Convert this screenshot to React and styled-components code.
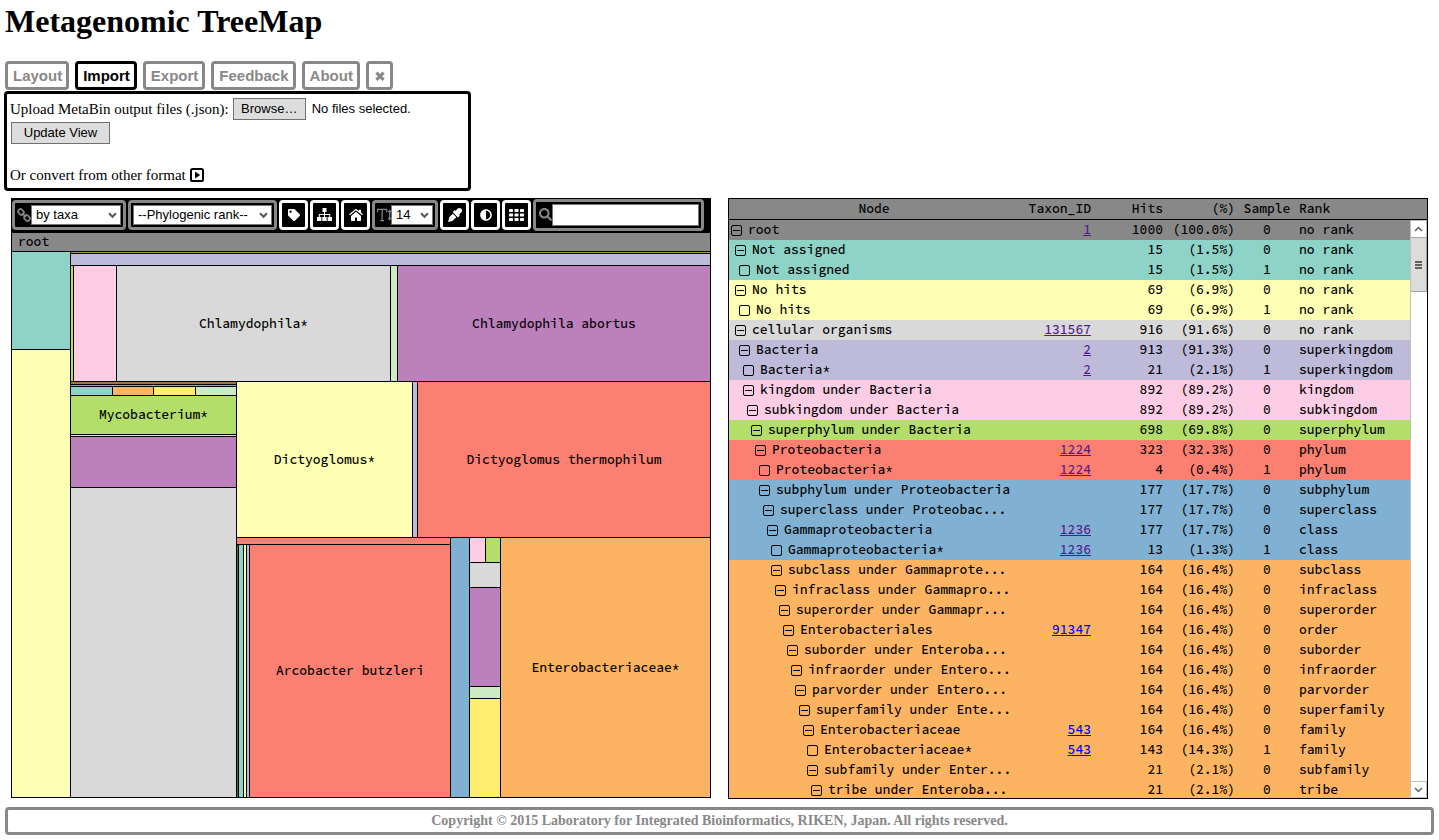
import React, { useRef } from 'react';
import styled, { createGlobalStyle } from 'styled-components';
import { FaTag, FaEyeDropper, FaAdjust, FaSearch } from 'react-icons/fa';

const MONO = '"Source Code Pro", "DejaVu Sans Mono", monospace';
const SANS = '"Liberation Sans", Arial, sans-serif';
const SERIF = '"Liberation Serif", "Times New Roman", serif';

const C = {
  gray: '#888888',
  teal: '#8dd3c7',
  cream: '#ffffb3',
  lavender: '#bebada',
  red: '#fb8072',
  blue: '#80b1d3',
  orange: '#fdb462',
  green: '#b3de69',
  pink: '#fccde5',
  silver: '#d9d9d9',
  purple: '#bc80bd',
  mint: '#ccebc5',
  yellow: '#ffed6f',
  gold: '#b0973e',
  brown: '#a8743c',
  slate: '#3f6a66',
};

const GlobalStyle = createGlobalStyle`
  * { box-sizing: border-box; }
  body {
    margin: 0;
    background: #fff;
    color: #000;
    font: 15px/20px ${SERIF};
  }
`;

const Page = styled.div`
  display: flex;
  flex-direction: column;
  padding: 2px 5px 5px 4px;
`;

const Title = styled.h1`
  margin: 0 0 21px 1px;
  font-size: 32px;
  line-height: 38px;
`;

const Tabs = styled.nav`
  display: flex;
  flex-wrap: wrap;
  gap: 6px;
  margin: 0 0 1px 1px;
`;

const Tab = styled.button`
  display: flex;
  align-items: center;
  height: 29px;
  padding: 0 4px 0 5px;
  border: 3px solid ${(p) => (p.$active ? '#000' : C.gray)};
  border-radius: 4px;
  background: #fff;
  color: ${(p) => (p.$active ? '#000' : C.gray)};
  font: bold 15px/18px ${SANS};
`;

const ImportPanel = styled.section`
  display: flex;
  flex-direction: column;
  align-items: flex-start;
  gap: 2px;
  width: 100%;
  max-width: 467px;
  padding: 4px 3px 1px;
  border: 3px solid #000;
  border-radius: 4px;
`;

const Line = styled.div`
  display: flex;
  flex-wrap: wrap;
  align-items: center;
  gap: 4px;
`;

const ConvertLine = styled(Line)`
  margin-top: 17px;
  line-height: 24px;
`;

const PlainButton = styled.button`
  min-width: ${(p) => p.$width}px;
  height: 22px;
  padding: 0 6px;
  border: 1px solid #707070;
  background: #dddddd;
  font: 13px/18px ${SANS};
`;

const UpdateButton = styled(PlainButton)`
  margin-left: 1px;
`;

const FileStatus = styled.span`
  margin-left: 2px;
  font: 13px/20px ${SANS};
`;

const IconButton = styled.button`
  display: flex;
  padding: 0;
  border: 0;
  background: none;
`;

const Panels = styled.main`
  display: grid;
  grid-template-columns: minmax(0, 1fr) minmax(0, 1fr);
  align-items: start;
  gap: 17px;
  margin: 7px 6px 8px 7px;
`;

const MapPanel = styled.section`
  display: flex;
  flex-direction: column;
  height: 600px;
  padding: 0 1px 1px;
  background: #000;
`;

const Toolbar = styled.div`
  display: flex;
  align-items: center;
  gap: 2px;
  height: 35px;
  padding: 0 6px 2px 0;
`;

const Group = styled.label`
  display: flex;
  align-items: center;
  flex: ${(p) => (p.$grow ? '1 1 0' : 'none')};
  min-width: 0;
  height: ${(p) => (p.$grow ? 32 : 30)}px;
  padding: 2px;
  border: 3px solid ${C.gray};
  border-radius: 4px;
  color: ${C.gray};
`;

const GroupIcon = styled.span`
  display: flex;
  flex: none;
  justify-content: center;
  width: 14px;
`;

const SelectWrap = styled.span`
  display: flex;
  position: relative;
  width: ${(p) => p.$width}px;
`;

const Select = styled.select`
  appearance: none;
  width: 100%;
  height: 20px;
  padding: 0 0 0 4px;
  border: 1px solid #777;
  border-radius: 0;
  background: #fff;
  color: #000;
  font: 13px/18px ${SANS};
`;

const Chevron = styled.svg`
  position: absolute;
  right: 4px;
  top: 7px;
  pointer-events: none;
`;

const SearchInput = styled.input`
  flex: 1 1 0;
  width: 0;
  min-width: 0;
  height: 22px;
  padding: 0 4px;
  border: 1px solid #777;
  background: #fff;
  font: 13px/18px ${SANS};
`;

const ToolButton = styled.button`
  display: flex;
  flex: none;
  align-items: center;
  justify-content: center;
  width: 29px;
  height: 30px;
  padding: 0;
  border: 3px solid #fff;
  border-radius: 4px;
  background: #000;
  color: #fff;
`;

const RootBar = styled.div`
  height: 18px;
  margin-bottom: 1px;
  padding-left: 6px;
  background: ${C.gray};
  font: 500 13px/18px ${MONO};
`;

const Split = styled.div`
  display: grid;
  flex: 1;
  gap: 1px;
  min-width: 0;
  min-height: 0;
  ${(p) => (p.$dir === 'row' ? 'grid-template-columns' : 'grid-template-rows')}:
    ${(p) => p.$sizes.map((s) => `minmax(0, ${s}fr)`).join(' ')};
`;

const Tile = styled.div`
  display: flex;
  align-items: center;
  justify-content: center;
  min-width: 0;
  min-height: 0;
  overflow: hidden;
  background: ${(p) => p.$color};
  font: 500 13px/18px ${MONO};
  white-space: nowrap;
`;

const TablePanel = styled.section`
  position: relative;
  height: 601px;
  overflow: hidden;
  border: 1px solid #000;
`;

const Table = styled.table`
  width: 100%;
  table-layout: fixed;
  border-spacing: 0;
  font: 500 13px/20px ${MONO};
`;

const Th = styled.th`
  height: 21px;
  padding: 0 4px;
  border-bottom: 1px solid #000;
  background: ${C.gray};
  font-weight: 500;
  text-align: ${(p) => p.$align};
  white-space: nowrap;

  &:nth-child(5) { padding: 0; }
`;

const Tr = styled.tr`
  background: ${(p) => p.$color};
`;

const Td = styled.td`
  height: 20px;
  padding: 0 4px;
  text-align: ${(p) => p.$align};
  white-space: nowrap;
`;

const NodeTd = styled.td`
  height: 20px;
  padding: 0 0 0 ${(p) => 2 + p.$level * 4}px;
`;

const NodeCell = styled.div`
  display: flex;
  align-items: center;
  gap: 6px;
  white-space: nowrap;
`;

const Toggle = styled.button`
  display: flex;
  align-items: center;
  justify-content: center;
  flex: none;
  width: 11px;
  height: 11px;
  padding: 0;
  border: 1px solid #000;
  border-radius: 2px;
  background: none;

  &::before {
    content: '';
    width: ${(p) => (p.$leaf ? 0 : 7)}px;
    height: 1px;
    background: #000;
  }
`;

const TaxonLink = styled.a`
  color: ${(p) => (p.$visited ? '#551a8b' : '#0000ee')};
`;

const ScrollBar = styled.div`
  position: absolute;
  top: 21px;
  right: 0;
  bottom: 0;
  display: flex;
  flex-direction: column;
  width: 17px;
  border-left: 1px solid #c0c0c0;
  background: #fff;
`;

const ScrollArrow = styled.button`
  display: flex;
  align-items: center;
  justify-content: center;
  height: 17px;
  padding: 0;
  border: solid #c0c0c0;
  border-width: ${(p) => (p.$down ? '1px 1px 1px 0' : '1px 1px 0 0')};
  background: #fff;
`;

const Thumb = styled.div`
  display: flex;
  flex-direction: column;
  align-items: center;
  justify-content: center;
  gap: 1px;
  height: 55px;
  margin-bottom: auto;
  border: 1px solid #a6a6a6;
  border-left: 0;
  background: #dcdcdc;
`;

const Grip = styled.span`
  width: 7px;
  height: 2px;
  background: #606060;
`;

const Footer = styled.footer`
  margin-left: 1px;
  padding: 2px;
  border: 3px solid ${C.gray};
  border-radius: 4px;
  color: ${C.gray};
  font-size: 14px;
  line-height: 18px;
  font-weight: bold;
  text-align: center;
`;

const tile = (size, color, label) => ({ size, color, label });
const split = (size, dir, items) => ({ size, dir, items });

const treemap = split(1, 'row', [
  split(58, 'column', [tile(97, C.teal), tile(447, C.cream)]),
  split(639, 'column', [
    tile(1, C.gold),
    tile(11, C.lavender),
    split(115, 'row', [
      tile(2, C.green),
      tile(42, C.pink),
      tile(273, C.silver, 'Chlamydophila*'),
      tile(6, C.mint),
      tile(312, C.purple, 'Chlamydophila abortus'),
    ]),
    split(415, 'row', [
      split(165, 'column', [
        tile(2, C.brown),
        tile(1, C.blue),
        split(8, 'row', [tile(1, C.teal), tile(1, C.orange), tile(1, C.yellow), tile(1, C.mint)]),
        tile(38, C.green, 'Mycobacterium*'),
        tile(1, C.pink),
        tile(50, C.purple),
        tile(309, C.silver),
      ]),
      split(473, 'column', [
        split(155, 'row', [
          tile(175, C.cream, 'Dictyoglomus*'),
          tile(4, C.lavender),
          tile(292, C.red, 'Dictyoglomus thermophilum'),
        ]),
        split(259, 'row', [
          split(213, 'column', [
            tile(6, C.red),
            split(252, 'row', [
              tile(1, C.slate),
              tile(4, C.teal),
              tile(2, C.cream),
              tile(2, C.lavender),
              tile(200, C.red, 'Arcobacter butzleri'),
            ]),
          ]),
          tile(18, C.blue),
          split(30, 'column', [
            split(24, 'row', [tile(15, C.pink), tile(14, C.green)]),
            tile(24, C.silver),
            tile(98, C.purple),
            tile(11, C.mint),
            tile(98, C.yellow),
          ]),
          tile(209, C.orange, 'Enterobacteriaceae*'),
        ]),
      ]),
    ]),
  ]),
]);

function TreeMap({ node }) {
  if (!node.items) return <Tile $color={node.color}>{node.label}</Tile>;
  return (
    <Split $dir={node.dir} $sizes={node.items.map((n) => n.size)}>
      {node.items.map((n, i) => (
        <TreeMap key={i} node={n} />
      ))}
    </Split>
  );
}

// level, name, taxon id, hits, percent, sample, rank, colour
const rows = [
  [0, 'root', '1', 1000, '100.0', 0, 'no rank', C.gray],
  [1, 'Not assigned', '', 15, '1.5', 0, 'no rank', C.teal],
  [2, 'Not assigned', '', 15, '1.5', 1, 'no rank', C.teal],
  [1, 'No hits', '', 69, '6.9', 0, 'no rank', C.cream],
  [2, 'No hits', '', 69, '6.9', 1, 'no rank', C.cream],
  [1, 'cellular organisms', '131567', 916, '91.6', 0, 'no rank', C.silver],
  [2, 'Bacteria', '2', 913, '91.3', 0, 'superkingdom', C.lavender],
  [3, 'Bacteria*', '2', 21, '2.1', 1, 'superkingdom', C.lavender],
  [3, 'kingdom under Bacteria', '', 892, '89.2', 0, 'kingdom', C.pink],
  [4, 'subkingdom under Bacteria', '', 892, '89.2', 0, 'subkingdom', C.pink],
  [5, 'superphylum under Bacteria', '', 698, '69.8', 0, 'superphylum', C.green],
  [6, 'Proteobacteria', '1224', 323, '32.3', 0, 'phylum', C.red],
  [7, 'Proteobacteria*', '1224', 4, '0.4', 1, 'phylum', C.red],
  [7, 'subphylum under Proteobacteria', '', 177, '17.7', 0, 'subphylum', C.blue],
  [8, 'superclass under Proteobac...', '', 177, '17.7', 0, 'superclass', C.blue],
  [9, 'Gammaproteobacteria', '1236', 177, '17.7', 0, 'class', C.blue],
  [10, 'Gammaproteobacteria*', '1236', 13, '1.3', 1, 'class', C.blue],
  [10, 'subclass under Gammaprote...', '', 164, '16.4', 0, 'subclass', C.orange],
  [11, 'infraclass under Gammapro...', '', 164, '16.4', 0, 'infraclass', C.orange],
  [12, 'superorder under Gammapr...', '', 164, '16.4', 0, 'superorder', C.orange],
  [13, 'Enterobacteriales', '91347', 164, '16.4', 0, 'order', C.orange],
  [14, 'suborder under Enteroba...', '', 164, '16.4', 0, 'suborder', C.orange],
  [15, 'infraorder under Entero...', '', 164, '16.4', 0, 'infraorder', C.orange],
  [16, 'parvorder under Entero...', '', 164, '16.4', 0, 'parvorder', C.orange],
  [17, 'superfamily under Ente...', '', 164, '16.4', 0, 'superfamily', C.orange],
  [18, 'Enterobacteriaceae', '543', 164, '16.4', 0, 'family', C.orange],
  [19, 'Enterobacteriaceae*', '543', 143, '14.3', 1, 'family', C.orange],
  [19, 'subfamily under Enter...', '', 21, '2.1', 0, 'subfamily', C.orange],
  [20, 'tribe under Enteroba...', '', 21, '2.1', 0, 'tribe', C.orange],
];

const unvisited = ['91347', '543'];

const CloseIcon = () => (
  <svg width="12" height="12" viewBox="0 0 12 12" aria-hidden="true">
    <path d="M2.4 2.6l7.2 7.2M9.6 2.6L2.4 9.8" stroke="currentColor" strokeWidth="3.2" />
  </svg>
);

const CaretSquare = () => (
  <svg width="14" height="14" viewBox="0 0 14 14" aria-hidden="true">
    <rect x="1" y="1" width="12" height="12" rx="1.6" fill="none" stroke="#000" strokeWidth="2" />
    <path d="M5 3.6v6.8L10.2 7z" />
  </svg>
);

const ChainIcon = () => (
  <svg width="14" height="14" viewBox="0 0 14 14" fill="none" stroke="currentColor" strokeWidth="1.6" aria-hidden="true">
    <rect x="-3" y="-2.3" width="6" height="4.6" rx="2" transform="translate(4 4) rotate(45)" />
    <rect x="-3" y="-2.3" width="6" height="4.6" rx="2" transform="translate(10 10) rotate(45)" />
    <path d="M5 5l4 4" />
  </svg>
);

const SitemapIcon = () => (
  <svg width="15" height="13" viewBox="0 0 15 13" fill="currentColor" aria-hidden="true">
    <path d="M5.5 0h4v4h-4zM0 9h4.4v4H0zM5.3 9h4.4v4H5.3zM10.6 9H15v4h-4.4zM7 4h1v5H7zM1.8 6h11.4v3h-1V7H2.8v2h-1z" />
  </svg>
);

const HomeIcon = () => (
  <svg width="14" height="12" viewBox="0 0 14 12" fill="currentColor" aria-hidden="true">
    <path d="M7 2.8L2 7v4.4c0 .3.3.6.6.6H6V8.5h2V12h3.4c.3 0 .6-.3.6-.6V7z" />
    <path d="M7 0c.4 0 .7.1 1 .4l2 1.700V.7h2v3l1.900 1.600-.8.900L7 1.200.9 6.200l-.8-.9L6 .4c.3-.3.600-.4 1-.4z" />
  </svg>
);

const GridIcon = () => (
  <svg width="15" height="12" viewBox="0 0 15 12" fill="currentColor" aria-hidden="true">
    {[0, 4.5, 9].map((y) => [0, 5.5, 11].map((x) => (
      <rect key={`${x}-${y}`} x={x} y={y} width="4" height="3" rx="0.4" />
    )))}
  </svg>
);

const TextHeightIcon = () => (
  <svg width="15" height="14" viewBox="0 0 15 14" aria-hidden="true">
    <path d="M.6 4V1h9.800v3M5.500 1v12M3.500 13h4M13.500 1.500v11" fill="none" stroke="currentColor" strokeWidth="1.300" />
    <path d="M11.300 4l2.200-3 1.500 2v1zM11.300 10l2.200 3 1.500-2v-1z" fill="currentColor" />
  </svg>
);

function SelectBox({ width, value }) {
  return (
    <SelectWrap $width={width}>
      <Select defaultValue={value}>
        <option>{value}</option>
      </Select>
      <Chevron width="9" height="7" viewBox="0 0 9 7" aria-hidden="true">
        <path d="M1 1.200l3.500 3.600L8 1.200" fill="none" stroke="#555" strokeWidth="2" />
      </Chevron>
    </SelectWrap>
  );
}

const ArrowIcon = ({ down }) => (
  <svg width="9" height="6" viewBox="0 0 9 6" aria-hidden="true">
    <path d={down ? 'M1 1l3.500 3.500L8 1' : 'M1 5l3.500-3.500L8 5'} fill="none" stroke="#606060" strokeWidth="1.500" />
  </svg>
);

export default function App() {
  const fileInput = useRef(null);
  return (
    <>
      <GlobalStyle />
      <Page>
        <Title>Metagenomic TreeMap</Title>
        <Tabs>
          <Tab>Layout</Tab>
          <Tab $active>Import</Tab>
          <Tab>Export</Tab>
          <Tab>Feedback</Tab>
          <Tab>About</Tab>
          <Tab aria-label="Close"><CloseIcon /></Tab>
        </Tabs>
        <ImportPanel>
          <Line>
            <label htmlFor="upload">Upload MetaBin output files (.json):</label>
            <input ref={fileInput} id="upload" type="file" accept=".json" multiple hidden />
            <PlainButton type="button" $width={73} onClick={() => fileInput.current.click()}>Browse…</PlainButton>
            <FileStatus>No files selected.</FileStatus>
          </Line>
          <UpdateButton type="button" $width={99}>Update View</UpdateButton>
          <ConvertLine>
            <span>Or convert from other format</span>
            <IconButton type="button" aria-label="Show converter"><CaretSquare /></IconButton>
          </ConvertLine>
        </ImportPanel>

        <Panels>
          <MapPanel>
            <Toolbar>
              <Group>
                <GroupIcon><ChainIcon /></GroupIcon>
                <SelectBox width={90} value="by taxa" />
              </Group>
              <Group>
                <SelectBox width={139} value="--Phylogenic rank--" />
              </Group>
              <ToolButton aria-label="Labels"><FaTag size={12} /></ToolButton>
              <ToolButton aria-label="Hierarchy"><SitemapIcon /></ToolButton>
              <ToolButton aria-label="Home"><HomeIcon /></ToolButton>
              <Group>
                <GroupIcon><TextHeightIcon /></GroupIcon>
                <SelectBox width={42} value="14" />
              </Group>
              <ToolButton aria-label="Pick colour"><FaEyeDropper size={14} /></ToolButton>
              <ToolButton aria-label="Contrast"><FaAdjust size={12} /></ToolButton>
              <ToolButton aria-label="Grid"><GridIcon /></ToolButton>
              <Group $grow>
                <GroupIcon><FaSearch size={13} /></GroupIcon>
                <SearchInput type="search" aria-label="Search" />
              </Group>
            </Toolbar>
            <RootBar>root</RootBar>
            <TreeMap node={treemap} />
          </MapPanel>

          <TablePanel>
            <Table>
              <colgroup>
                <col />
                <col width="76" />
                <col width="72" />
                <col width="72" />
                <col width="56" />
                <col width="132" />
              </colgroup>
              <thead>
                <tr>
                  <Th $align="center">Node</Th>
                  <Th $align="right">Taxon_ID</Th>
                  <Th $align="right">Hits</Th>
                  <Th $align="right">(%)</Th>
                  <Th $align="center">Sample</Th>
                  <Th $align="left">Rank</Th>
                </tr>
              </thead>
              <tbody>
                {rows.map(([level, name, id, hits, pct, sample, rank, color], i) => (
                  <Tr key={i} $color={color}>
                    <NodeTd $level={level}>
                      <NodeCell>
                        <Toggle $leaf={sample === 1} aria-label={`Toggle ${name}`} />
                        <span>{name}</span>
                      </NodeCell>
                    </NodeTd>
                    <Td $align="right">
                      {id && <TaxonLink href={`#taxon-${id}`} $visited={!unvisited.includes(id)}>{id}</TaxonLink>}
                    </Td>
                    <Td $align="right">{hits}</Td>
                    <Td $align="right">({pct}%)</Td>
                    <Td $align="center">{sample}</Td>
                    <Td $align="left">{rank}</Td>
                  </Tr>
                ))}
              </tbody>
            </Table>
            <ScrollBar>
              <ScrollArrow aria-label="Scroll up"><ArrowIcon /></ScrollArrow>
              <Thumb><Grip /><Grip /><Grip /></Thumb>
              <ScrollArrow $down aria-label="Scroll down"><ArrowIcon down /></ScrollArrow>
            </ScrollBar>
          </TablePanel>
        </Panels>

        <Footer>Copyright © 2015 Laboratory for Integrated Bioinformatics, RIKEN, Japan. All rights reserved.</Footer>
      </Page>
    </>
  );
}
